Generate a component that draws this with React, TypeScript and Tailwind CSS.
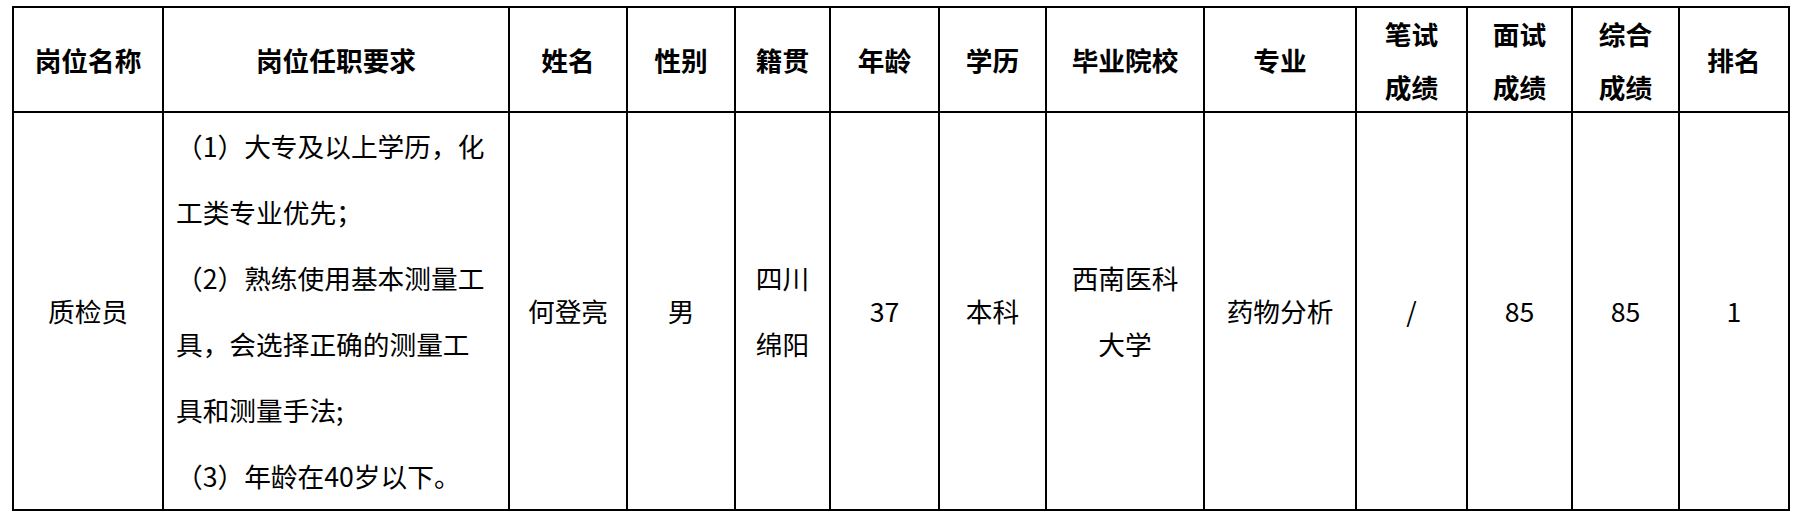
import React from 'react';

type Col = {
  head: React.ReactNode;
  cell: React.ReactNode;
  width: string;
};

const requirements = [
  '（1）大专及以上学历，化',
  '工类专业优先；',
  '（2）熟练使用基本测量工',
  '具，会选择正确的测量工',
  '具和测量手法;',
  '（3）年龄在40岁以下。',
];

const columns: Col[] = [
  { head: '岗位名称', cell: '质检员', width: 'w-[148px]' },
  {
    head: '岗位任职要求',
    width: 'w-[344px]',
    cell: (
      <div className="self-stretch w-full pl-[12px] text-left leading-[66px]">
        {requirements.map((line, i) => (
          <div key={i} className="whitespace-nowrap">
            {line}
          </div>
        ))}
      </div>
    ),
  },
  { head: '姓名', cell: '何登亮', width: 'w-[116px]' },
  { head: '性别', cell: '男', width: 'w-[106px]' },
  {
    head: '籍贯',
    width: 'w-[93px]',
    cell: (
      <>
        四川
        <br />
        绵阳
      </>
    ),
  },
  { head: '年龄', cell: '37', width: 'w-[107px]' },
  { head: '学历', cell: '本科', width: 'w-[105px]' },
  {
    head: '毕业院校',
    width: 'w-[156px]',
    cell: (
      <>
        西南医科
        <br />
        大学
      </>
    ),
  },
  { head: '专业', cell: '药物分析', width: 'w-[150px]' },
  {
    head: (
      <>
        笔试
        <br />
        成绩
      </>
    ),
    cell: '/',
    width: 'w-[109px]',
  },
  {
    head: (
      <>
        面试
        <br />
        成绩
      </>
    ),
    cell: '85',
    width: 'w-[103px]',
  },
  {
    head: (
      <>
        综合
        <br />
        成绩
      </>
    ),
    cell: '85',
    width: 'w-[105px]',
  },
  { head: '排名', cell: '1', width: 'w-[108px]' },
];

export default function App() {
  return (
    <div className="w-[1798px] h-[521px] bg-white pl-[12px] pt-[6px] text-black font-['Noto_Sans_CJK_SC','Noto_Sans',sans-serif] text-[26.7px]">
      <div className="inline-flex flex-col gap-[2px] bg-black p-[2px]">
        {/* header row */}
        <div className="flex gap-[2px] h-[103px]">
          {columns.map((c, i) => (
            <div
              key={i}
              className={`${c.width} shrink-0 bg-white flex items-center justify-center text-center font-bold leading-[53px]`}
            >
              <div>{c.head}</div>
            </div>
          ))}
        </div>

        {/* data row */}
        <div className="flex gap-[2px] h-[396px]">
          {columns.map((c, i) => (
            <div
              key={i}
              className={`${c.width} shrink-0 bg-white flex items-center justify-center text-center leading-[66px]`}
            >
              {i === 1 ? c.cell : <div>{c.cell}</div>}
            </div>
          ))}
        </div>
      </div>
    </div>
  );
}
